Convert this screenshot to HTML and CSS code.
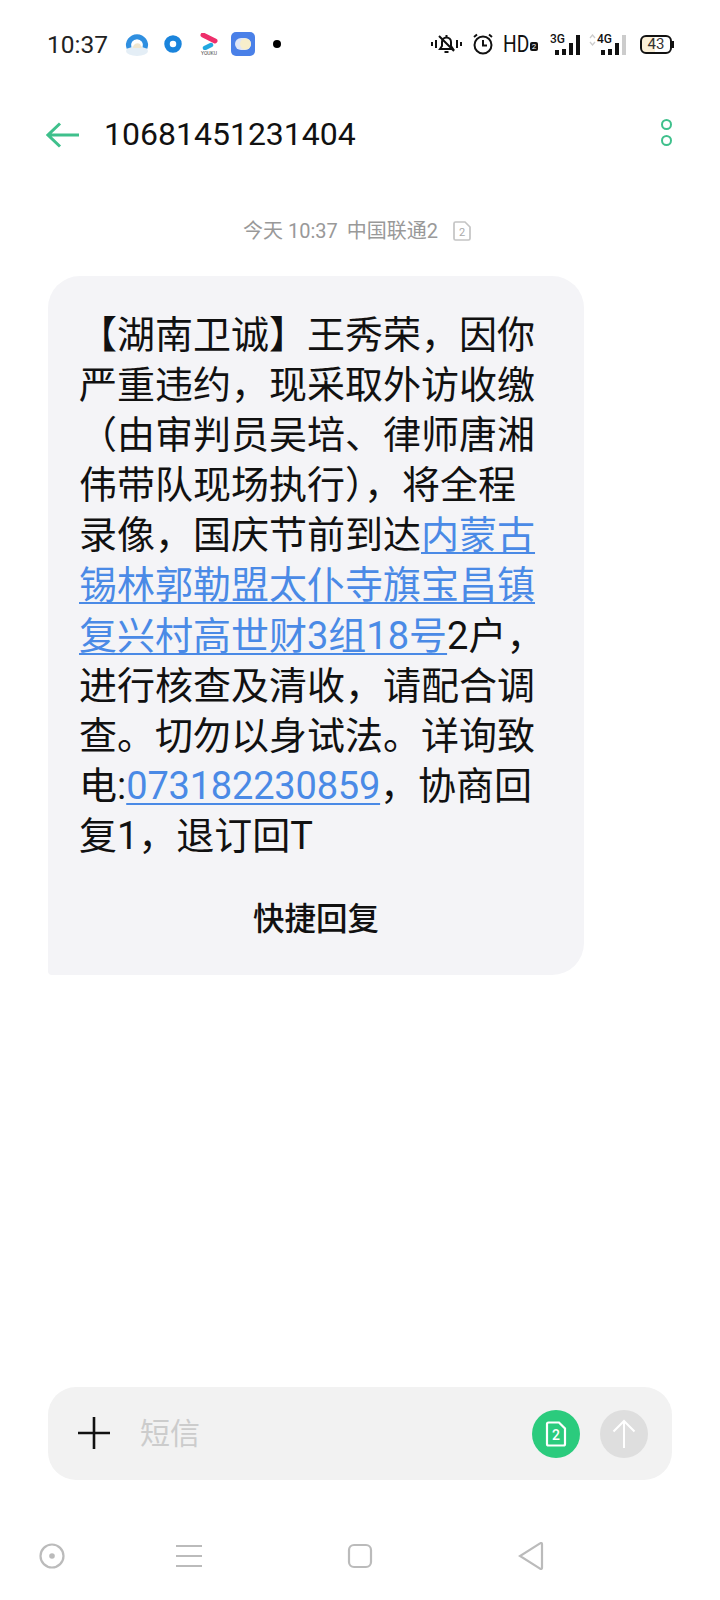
FILE: index.html
```html
<!DOCTYPE html>
<html lang="zh-CN">
<head>
    <meta charset="UTF-8">
    <meta name="viewport" content="width=device-width, initial-scale=1.0">
    <title>短信</title>
    <link rel="stylesheet" href="styles.css">
</head>
<body>
    <div class="phone">
        <!-- status bar -->
        <div class="status-bar">
            <div class="status-left">
                <span class="clock">10:37</span>
                <svg class="app app-cloud" width="26" height="26" viewBox="0 0 26 26">
                    <ellipse cx="13" cy="20" rx="11" ry="5" fill="#e4eef6"/>
                    <path d="M5 17a8.5 8.5 0 1 1 16 0" fill="none" stroke="#2f8fe0" stroke-width="5"/>
                    <path d="M9 17a4.500 4.500 0 0 1 7-4l2 4z" fill="#f0e6cf"/>
                </svg>
                <svg class="app app-disc" width="20" height="20" viewBox="0 0 20 20">
                    <circle cx="10" cy="10" r="6" fill="#fff" stroke="#1a84dc" stroke-width="5.500"/>
                </svg>
                <div class="app app-youku">
                    <svg width="18" height="17" viewBox="0 0 18 17">
                        <path d="M3 2l12 6" stroke="#ee2f6b" stroke-width="5" stroke-linecap="round"/>
                        <path d="M5 15l6-3" stroke="#22a8e0" stroke-width="4.500" stroke-linecap="round"/>
                    </svg>
                    <span class="youku-label">YOUKU</span>
                </div>
                <svg class="app app-weather" width="24" height="24" viewBox="0 0 24 24">
                    <rect width="24" height="24" rx="5" fill="#4a80e8"/>
                    <rect x="4" y="6" width="16" height="12" rx="6" fill="#dfe6f6"/>
                    <circle cx="14.500" cy="12" r="5.500" fill="#f7eecb"/>
                </svg>
                <span class="notif-dot"></span>
            </div>
            <div class="status-right">
                <svg class="st-bell" width="31" height="22" viewBox="0 0 31 22">
                    <g fill="none" stroke="#111" stroke-width="2">
                        <path d="M9 16h13l-2-3V9a4.500 4.500 0 0 0-9 0v4z"/>
                        <path d="M15.500 2v2M13.500 19h4M8 3l15 15"/>
                        <path d="M1 9v4M5 7v8M26 7v8M30 9v4"/>
                    </g>
                </svg>
                <svg class="st-alarm" width="20" height="22" viewBox="0 0 20 22">
                    <g fill="none" stroke="#111" stroke-width="2">
                        <circle cx="10" cy="12" r="8.500"/>
                        <path d="M10 7v5.500h4M1 4l3-2.500M19 4l-3-2.500"/>
                    </g>
                </svg>
                <div class="st-hd"><span class="hd-text">HD</span><span class="hd-badge">2</span></div>
                <div class="st-net">
                    <span class="net-label">3G</span>
                    <div class="bars">
                        <i class="bar b1"></i><i class="bar b2"></i><i class="bar b3"></i><i class="bar b4"></i>
                    </div>
                </div>
                <div class="st-net st-net-2">
                    <svg class="updown" width="7" height="12" viewBox="0 0 7 12">
                        <path d="M1 4l2.500-3L6 4M1 8l2.500 3L6 8" fill="none" stroke="#ccc" stroke-width="1.300"/>
                    </svg>
                    <span class="net-label">4G</span>
                    <div class="bars">
                        <i class="bar b1"></i><i class="bar b2"></i><i class="bar b3"></i><i class="bar b4 off"></i>
                    </div>
                </div>
                <div class="battery">
                    <div class="battery-body"><span>43</span></div>
                    <span class="battery-cap"></span>
                </div>
            </div>
        </div>

        <!-- title bar -->
        <div class="title-bar">
            <svg class="back" width="34" height="26" viewBox="0 0 34 26">
                <path d="M33 13H2M14 1.500L2 13l12 11.500" fill="none" stroke="#3fc08c" stroke-width="3"/>
            </svg>
            <h1 class="number">10681451231404</h1>
            <div class="more"><span></span><span></span></div>
        </div>

        <!-- conversation -->
        <div class="thread">
            <div class="time-line">
                <span>今天 10:37</span>
                <span>中国联通2</span>
                <svg class="sim-mini" width="18" height="20" viewBox="0 0 18 20">
                    <path d="M1 2.500a1.500 1.500 0 0 1 1.500-1.500H12l5 5v11.500a1.500 1.500 0 0 1-1.500 1.500h-13A1.500 1.500 0 0 1 1 17.500z" fill="none" stroke="#c4c4c4" stroke-width="1.700"/>
                    <text x="9" y="15" class="sim-mini-num">2</text>
                </svg>
            </div>

            <div class="bubble">
                <p class="msg">【湖南卫诚】王秀荣，因你<br>严重违约，现采取外访收缴<br>（由审判员吴培、律师唐湘<br>伟带队现场执行），将全程<br>录像，国庆节前到达<a class="link" href="#">内蒙古<br>锡林郭勒盟太仆寺旗宝昌镇<br>复兴村高世财3组18号</a>2户，<br>进行核查及清收，请配合调<br>查。切勿以身试法。详询致<br>电:<a class="link phone-link" href="#">073182230859</a>，协商回<br>复1，退订回T</p>
                <div class="quick-reply">快捷回复</div>
            </div>
        </div>

        <!-- input -->
        <div class="composer">
            <svg class="plus" width="32" height="32" viewBox="0 0 32 32">
                <path d="M0 16h32M16 0v32" stroke="#111" stroke-width="2.600"/>
            </svg>
            <span class="placeholder">短信</span>
            <div class="round-btn sim-btn">
                <svg width="22" height="26" viewBox="0 0 22 26">
                    <path d="M2 3a1.500 1.500 0 0 1 1.500-1.500H14L20 7.500V23a1.500 1.500 0 0 1-1.500 1.500h-15A1.500 1.500 0 0 1 2 23z" fill="none" stroke="#fff" stroke-width="2.200"/>
                    <text x="11" y="19" class="sim-num">2</text>
                </svg>
            </div>
            <div class="round-btn send-btn">
                <svg width="24" height="30" viewBox="0 0 24 30">
                    <path d="M12 29V2M1.500 12.500L12 2l10.500 10.500" fill="none" stroke="#fff" stroke-width="2"/>
                </svg>
            </div>
        </div>

        <!-- nav buttons -->
        <div class="nav-bar">
            <svg class="nav-first" width="26" height="26" viewBox="0 0 26 26">
                <circle cx="13" cy="13" r="11.500" fill="none" stroke="#bbb" stroke-width="2.200"/>
                <circle cx="13" cy="13" r="2.800" fill="#bbb"/>
            </svg>
            <svg width="26" height="24" viewBox="0 0 26 24">
                <path d="M0 2h26M0 12h26M0 22h26" stroke="#bbb" stroke-width="2.200"/>
            </svg>
            <svg width="26" height="26" viewBox="0 0 26 26">
                <rect x="2" y="2" width="22" height="22" rx="5" fill="none" stroke="#bbb" stroke-width="2.200"/>
            </svg>
            <svg width="26" height="28" viewBox="0 0 26 28">
                <path d="M24 2v24a1 1 0 0 1-1.600.8L2 14 22.400 1.200A1 1 0 0 1 24 2z" fill="none" stroke="#bbb" stroke-width="2.200"/>
            </svg>
        </div>
    </div>
</body>
</html>
```
FILE: styles.css
```css
/* page */
body {
    margin: 0;
    background-color: #fff;
    font-family: Roboto, "Noto Sans CJK SC", sans-serif;
    color: #111;
}

.phone {
    width: 720px;
    height: 1600px;
    display: flex;
    flex-direction: column;
    overflow: hidden;
}

/* status bar */
.status-bar {
    height: 88px;
    box-sizing: border-box;
    padding: 0 46px 0 47px;
    display: flex;
    justify-content: space-between;
    align-items: center;
}

.status-left,
.status-right {
    display: flex;
    align-items: center;
}

.clock {
    font-size: 24.500px;
    color: #222;
    width: 77px;
}

.app-cloud {
    margin-right: 13px;
}

.app-disc {
    margin-right: 14px;
}

.app-youku {
    width: 24px;
    display: flex;
    flex-direction: column;
    align-items: center;
    margin-right: 10px;
}

.youku-label {
    font-size: 5px;
    line-height: 6px;
    color: #444;
}

.app-weather {
    margin-right: 18px;
}

.notif-dot {
    width: 8px;
    height: 8px;
    border-radius: 50%;
    background-color: #000;
}

.st-bell {
    margin-right: 11px;
}

.st-alarm {
    margin-right: 10px;
}

.st-hd {
    display: flex;
    align-items: flex-end;
    width: 35px;
    margin-right: 12px;
}

.hd-text {
    display: inline-block;
    width: 26px;
    font-size: 24px;
    line-height: 24px;
    transform: scaleX(0.8);
    transform-origin: left center;
}

.hd-badge {
    width: 8px;
    height: 9px;
    margin: 0 0 5px 1px;
    border-radius: 2px;
    background-color: #111;
    color: #fff;
    font-size: 8px;
    line-height: 9px;
    text-align: center;
}

.st-net {
    position: relative;
    width: 30px;
    height: 22px;
    margin-right: 9px;
}

.st-net-2 {
    width: 37px;
    margin-right: 14px;
}

.net-label {
    position: absolute;
    left: 0;
    top: 0;
    font-size: 12px;
    line-height: 13px;
    font-weight: 500;
}

.st-net-2 .net-label {
    left: 8px;
}

.updown {
    position: absolute;
    left: 0;
    top: 1px;
}

.bars {
    position: absolute;
    right: 0;
    bottom: 0;
    display: flex;
    align-items: flex-end;
    gap: 3px;
}

.bar {
    width: 4px;
    background-color: #111;
}

.b1 {
    height: 5px;
}

.b2 {
    height: 6px;
}

.b3 {
    height: 12px;
}

.b4 {
    height: 20px;
}

.bar.off {
    background-color: #ccc;
}

.battery {
    display: flex;
    align-items: center;
}

.battery-body {
    width: 28px;
    height: 15px;
    border: 2px solid #111;
    border-radius: 6px;
    background: linear-gradient(to right, #fbf0d8 45%, #fff 45%);
    font-size: 15px;
    line-height: 15px;
    text-align: center;
    color: #333;
}

.battery-cap {
    width: 2px;
    height: 7px;
    background-color: #111;
}

/* title bar */
.title-bar {
    height: 92px;
    box-sizing: border-box;
    padding: 0 48px 0 46px;
    display: flex;
    align-items: center;
}

.back {
    margin: 2px 24px 0 0;
}

.number {
    margin: 0;
    flex: 1;
    font-size: 32px;
    font-weight: 400;
    color: #111;
}

.more {
    display: flex;
    flex-direction: column;
    gap: 5px;
    margin-bottom: 3px;
}

.more span {
    width: 11px;
    height: 11px;
    box-sizing: border-box;
    border: 2.500px solid #3fc08c;
    border-radius: 50%;
}

/* conversation */
.thread {
    flex: 1;
    padding: 0 48px;
}

.time-line {
    height: 96px;
    box-sizing: border-box;
    padding: 38px 0 0 195px;
    display: flex;
    align-items: flex-start;
    gap: 9px;
    font-size: 20px;
    line-height: 26px;
    color: #999;
}

.sim-mini {
    margin: 3px 0 0 6px;
}

.sim-mini-num {
    font-size: 11px;
    fill: #aaa;
    text-anchor: middle;
}

.bubble {
    width: 536px;
    height: 699px;
    box-sizing: border-box;
    padding: 34px 0 0 31px;
    background-color: #f4f4f7;
    border-radius: 32px 32px 32px 4px;
}

.msg {
    margin: 0;
    font-size: 38px;
    line-height: 50.100px;
    white-space: nowrap;
    color: #111;
}

.link {
    color: #4a8ae6;
    text-decoration: underline;
    text-decoration-thickness: 2px;
    text-underline-offset: 4px;
}

.phone-link {
    letter-spacing: -0.200px;
}

.quick-reply {
    margin: 34px 0 0 -31px;
    font-size: 31.500px;
    line-height: 50px;
    font-weight: 500;
    text-align: center;
}

/* input */
.composer {
    height: 93px;
    box-sizing: border-box;
    margin: 0 48px;
    padding: 0 24px 0 30px;
    display: flex;
    align-items: center;
    background-color: #f2f2f2;
    border-radius: 28px;
}

.plus {
    margin: 0 30px 2px 0;
}

.placeholder {
    flex: 1;
    padding-bottom: 6px;
    font-size: 30px;
    color: #ccc;
}

.round-btn {
    width: 48px;
    height: 48px;
    border-radius: 50%;
    display: flex;
    align-items: center;
    justify-content: center;
}

.sim-btn {
    background-color: #2bcb7d;
    margin-right: 20px;
}

.sim-num {
    font-size: 14px;
    font-weight: 500;
    fill: #fff;
    text-anchor: middle;
}

.send-btn {
    background-color: #dedede;
}

/* nav buttons */
.nav-bar {
    height: 120px;
    box-sizing: border-box;
    padding: 32px 0 0 39px;
    display: flex;
    align-items: center;
    gap: 145px;
}

.nav-first {
    margin-right: -34px;
}
```
